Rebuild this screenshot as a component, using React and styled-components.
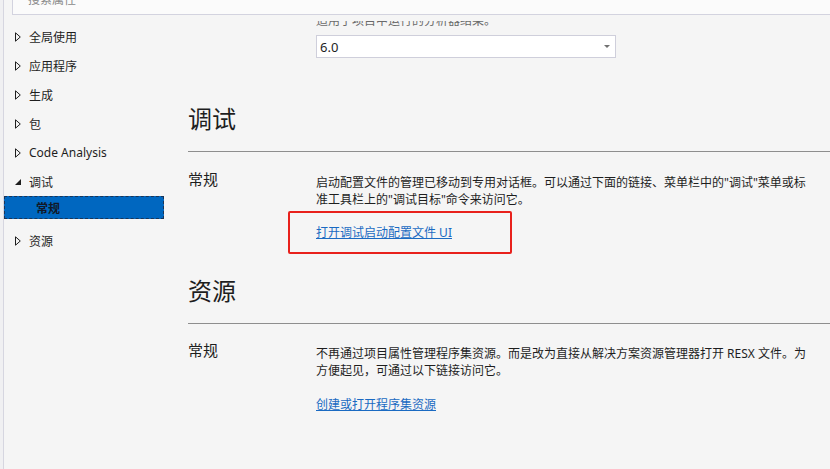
import React from "react";
import styled, { createGlobalStyle } from "styled-components";

const Global = createGlobalStyle`
  *, *::before, *::after { box-sizing: border-box; }
  html, body { margin: 0; padding: 0; background: #f5f5f5; }
  body { font-family: "Noto Sans", "Noto Sans CJK SC", sans-serif; color: #1e1e1e; }
  #root { height: 469px; }
`;

const Page = styled.div`
  display: flex;
  height: 469px;
  width: 830px;
  overflow: hidden;
  background: #f5f5f5;
`;

const EdgeStrip = styled.div`
  width: 4px;
  flex: none;
  background: #f0f0f2;
  border-right: 1px solid #d6d6e0;
`;

const Column = styled.div`
  flex: 1;
  display: flex;
  flex-direction: column;
  min-width: 0;
`;

const SearchBar = styled.div`
  margin-top: -14px;
  margin-left: 8px;
  height: 29px;
  flex: none;
  background: #fbfbfb;
  border-left: 1px solid #d3d3df;
  border-bottom: 1px solid #d3d3df;
  padding-left: 15px;
  font-size: 12px;
  line-height: 28px;
  color: #8a8a8a;
`;

const Body = styled.div`
  flex: 1;
  display: flex;
  min-height: 0;
`;

const Sidebar = styled.nav`
  width: 160px;
  flex: none;
  padding-top: 7px;
  display: flex;
  flex-direction: column;
`;

const NavRow = styled.div`
  height: 29px;
  display: flex;
  align-items: center;
  padding-left: 11px;
  gap: 8px;
  font-size: 12px;
`;

const Caret = styled.svg`
  width: 6px;
  height: 10px;
  flex: none;
`;

const ChildList = styled.div`
  padding-bottom: 7px;
`;

const SelectedRow = styled.div`
  height: 23px;
  display: flex;
  align-items: center;
  padding-left: 31px;
  background: #0067c0;
  border: 1px dashed #1a3558;
  font-size: 12px;
  font-weight: 600;
  color: #111827;
`;

const Content = styled.main`
  flex: 1;
  min-width: 0;
  padding-left: 24px;
  margin-top: 6px;
  overflow: hidden;
`;

const ClippedNote = styled.div`
  margin: -8px 0 0 128px;
  font-size: 12px;
  line-height: 16px;
  color: #6a6a6a;
  white-space: nowrap;
`;

const Select = styled.div`
  margin: 6px 0 0 128px;
  width: 300px;
  height: 23px;
  background: #ffffff;
  border: 1px solid #cfcfdb;
  display: flex;
  align-items: center;
  justify-content: space-between;
  padding: 0 4px 0 3px;
  font-size: 13px;
  color: #1e1e1e;
`;

const SelectArrow = styled.span`
  width: 0;
  height: 0;
  border-left: 3px solid transparent;
  border-right: 3px solid transparent;
  border-top: 3px solid #717171;
  margin-right: 1px;
`;

const Section = styled.section`
  margin-top: ${(p) => p.$gap}px;
`;

const Heading = styled.h2`
  margin: 0;
  font-size: 24px;
  line-height: 30px;
  font-weight: 400;
  color: #1e1e1e;
  padding-bottom: 17px;
  border-bottom: 1px solid #8e8e8e;
`;

const Row = styled.div`
  display: grid;
  grid-template-columns: 128px 1fr;
  margin-top: ${(p) => p.$gap}px;
`;

const Label = styled.div`
  font-size: 15px;
  line-height: 20px;
  color: #1e1e1e;
`;

const Detail = styled.div`
  padding-top: 5px;
`;

const Desc = styled.p`
  margin: 0;
  font-size: 12px;
  line-height: 17px;
  color: #1e1e1e;
  white-space: nowrap;
`;

const LinkLine = styled.div`
  position: relative;
  margin-top: ${(p) => p.$gap}px;
  font-size: 12px;
  line-height: 18px;
  width: max-content;
`;

const Link = styled.a`
  color: #1a6ac2;
  text-decoration: underline;
  cursor: pointer;
`;

const Callout = styled.span`
  position: absolute;
  left: -28px;
  top: -13px;
  width: 224px;
  height: 43px;
  border: 2px solid #e8211c;
  border-radius: 2px;
  pointer-events: none;
`;

const OpenCaret = () => (
  <Caret viewBox="0 0 6 10">
    <path d="M0.5 0.8 L5.3 5 L0.5 9.2 Z" fill="none" stroke="#1e1e1e" strokeWidth="1" />
  </Caret>
);

const ExpandedCaret = () => (
  <Caret viewBox="0 0 6 10">
    <path d="M6 2 L6 8 L0 8 Z" fill="#1e1e1e" />
  </Caret>
);

const navItems = ["全局使用", "应用程序", "生成", "包", "Code Analysis"];

export default function App() {
  return (
    <>
      <Global />
      <Page>
        <EdgeStrip />
        <Column>
          <SearchBar>搜索属性</SearchBar>
          <Body>
            <Sidebar>
              {navItems.map((t) => (
                <NavRow key={t}>
                  <OpenCaret />
                  {t}
                </NavRow>
              ))}
              <NavRow>
                <ExpandedCaret />
                调试
              </NavRow>
              <ChildList>
                <SelectedRow>常规</SelectedRow>
              </ChildList>
              <NavRow>
                <OpenCaret />
                资源
              </NavRow>
            </Sidebar>
            <Content>
              <ClippedNote>适用于项目中运行的分析器结果。</ClippedNote>
              <Select>
                <span>6.0</span>
                <SelectArrow />
              </Select>
              <Section $gap={46}>
                <Heading>调试</Heading>
                <Row $gap={17}>
                  <Label>常规</Label>
                  <Detail>
                    <Desc>
                      启动配置文件的管理已移动到专用对话框。可以通过下面的链接、菜单栏中的"调试"菜单或标
                      <br />
                      准工具栏上的"调试目标"命令来访问它。
                    </Desc>
                    <LinkLine $gap={16}>
                      <Link>打开调试启动配置文件 UI</Link>
                      <Callout />
                    </LinkLine>
                  </Detail>
                </Row>
              </Section>
              <Section $gap={34}>
                <Heading>资源</Heading>
                <Row $gap={16}>
                  <Label>常规</Label>
                  <Detail>
                    <Desc>
                      不再通过项目属性管理程序集资源。而是改为直接从解决方案资源管理器打开 RESX 文件。为
                      <br />
                      方便起见，可通过以下链接访问它。
                    </Desc>
                    <LinkLine $gap={17}>
                      <Link>创建或打开程序集资源</Link>
                    </LinkLine>
                  </Detail>
                </Row>
              </Section>
            </Content>
          </Body>
        </Column>
      </Page>
    </>
  );
}
